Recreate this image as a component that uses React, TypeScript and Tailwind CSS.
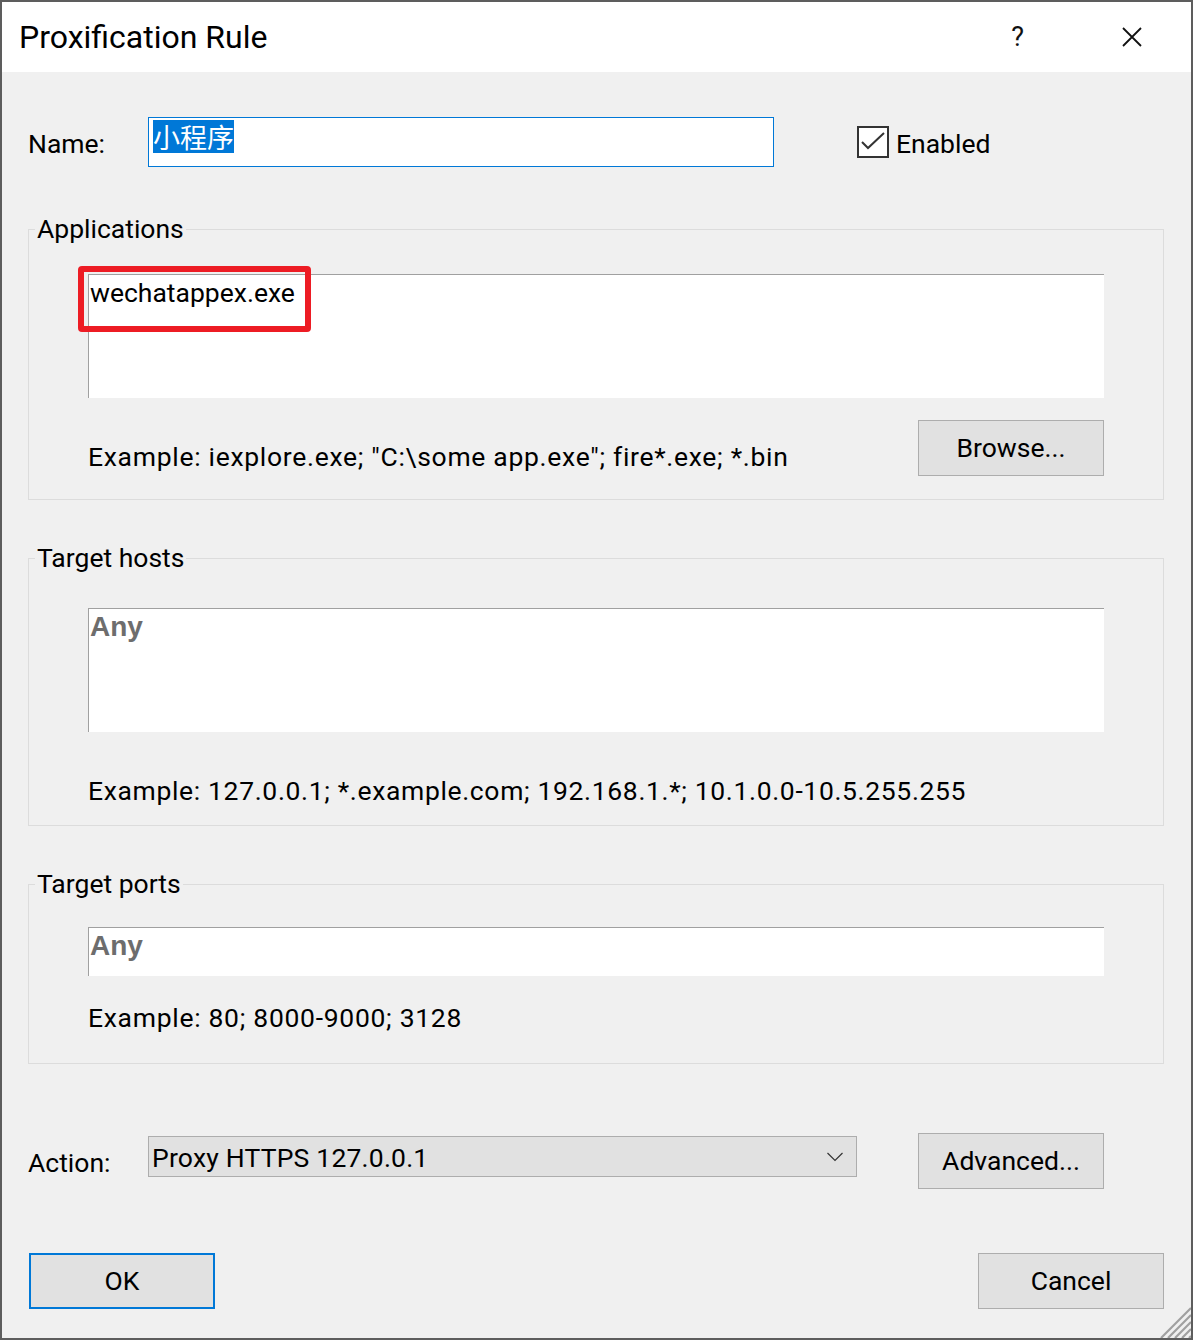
import type { ReactNode } from 'react'

const ui = "font-['Roboto','Noto_Sans_CJK_SC',sans-serif]"

function WinButton({ children, focused = false, className = '' }: { children: ReactNode; focused?: boolean; className?: string }) {
  return (
    <button
      className={`h-[56px] w-[186px] shrink-0 bg-[#e1e1e1] text-[26.5px] leading-none text-black ${
        focused ? 'border-2 border-[#0078d7]' : 'border border-[#adadad]'
      } ${className}`}
    >
      {children}
    </button>
  )
}

function Group({ title, className = '', children }: { title: string; className?: string; children: ReactNode }) {
  return (
    <fieldset className={`w-[1136px] border border-[#dcdcdc] ${className}`}>
      <legend className="ml-[6px] px-[2px] text-[26.5px] leading-[40px] text-black">{title}</legend>
      {children}
    </fieldset>
  )
}

function AnyText() {
  return (
    <span className="font-['Liberation_Sans',Arial,sans-serif] text-[28px] font-bold leading-[36px] text-[#6d6d6d]">Any</span>
  )
}

export default function App() {
  return (
    <div className={`${ui} relative flex h-[1340px] w-[1193px] flex-col overflow-hidden border-2 border-[#5d5d5d] text-black`}>
      {/* Title bar */}
      <div className="flex h-[70px] shrink-0 items-center bg-white pl-[17px]">
        <span className="text-[32px] leading-none">Proxification Rule</span>
        <span className="ml-auto text-[27px] leading-none text-[#111]">?</span>
        <svg className="ml-[98px] mr-[49px]" width="20" height="20" viewBox="0 0 20 20" fill="none" stroke="#111" strokeWidth="1.8">
          <path d="M1 1 L19 19 M19 1 L1 19" />
        </svg>
      </div>

      {/* Body */}
      <div className="relative flex-1 bg-[#f0f0f0] pl-[26px] pt-[45px]">
        {/* Name row */}
        <div className="flex h-[50px] items-center">
          <span className="mt-[4px] w-[120px] text-[26.5px] leading-[40px]">Name:</span>
          <div className="flex h-[50px] w-[626px] items-start border border-[#0078d7] bg-white pl-[4px] pt-[2px]">
            <span className="inline-block h-[33px] bg-[#0078d7] font-['Noto_Sans_CJK_SC',sans-serif] text-[27px] leading-[33px] text-white">
              小程序
            </span>
          </div>
          <div className="ml-[83px] flex h-[32px] w-[32px] items-center justify-center border-2 border-[#333] bg-white">
            <svg width="26" height="20" viewBox="0 0 26 20" fill="none" stroke="#333" strokeWidth="2">
              <path d="M2 10 L8 16 L24 1" />
            </svg>
          </div>
          <span className="ml-[7px] mt-[4px] text-[26.5px] leading-[40px]">Enabled</span>
        </div>

        {/* Applications */}
        <Group title="Applications" className="mt-[42px]">
          <div className="px-[59px] pb-[23px]">
            <div className="relative mt-[25px] h-[124px] border-l border-t border-[#a0a0a0] bg-white pl-[1px]">
              <span className="text-[26.5px] leading-[36px]">wechatappex.exe</span>
              <div className="absolute left-[-11px] top-[-9px] h-[66px] w-[233px] rounded-[4px] border-[6px] border-[#ed1c24]" />
            </div>
            <div className="mt-[22px] flex items-end justify-between">
              <span className="text-[26.5px] leading-[38px] tracking-[0.7px]">
                Example: iexplore.exe; "C:\some app.exe"; fire*.exe; *.bin
              </span>
              <WinButton>Browse...</WinButton>
            </div>
          </div>
        </Group>

        {/* Target hosts */}
        <Group title="Target hosts" className="mt-[38px]">
          <div className="px-[59px] pb-[14px]">
            <div className="mt-[30px] h-[124px] border-l border-t border-[#a0a0a0] bg-white pl-[1px]">
              <AnyText />
            </div>
            <p className="mt-[39px] text-[26.5px] leading-[40px] tracking-[0.65px]">
              Example: 127.0.0.1; *.example.com; 192.168.1.*; 10.1.0.0-10.5.255.255
            </p>
          </div>
        </Group>

        {/* Target ports */}
        <Group title="Target ports" className="mt-[38px]">
          <div className="px-[59px] pb-[25px]">
            <div className="mt-[23px] h-[49px] border-l border-t border-[#a0a0a0] bg-white pl-[1px]">
              <AnyText />
            </div>
            <p className="mt-[22px] text-[26.5px] leading-[40px] tracking-[0.7px]">Example: 80; 8000-9000; 3128</p>
          </div>
        </Group>

        {/* Action row */}
        <div className="mt-[69px] flex items-start">
          <span className="mt-[10px] w-[120px] text-[26.5px] leading-[40px]">Action:</span>
          <div className="mt-[3px] flex h-[41px] w-[709px] items-center justify-between border border-[#adadad] bg-[#e1e1e1] pl-[3px] pr-[13px]">
            <span className="pt-[3px] text-[26.5px] leading-[38px] tracking-[0.2px]">Proxy HTTPS 127.0.0.1</span>
            <svg width="16" height="10" viewBox="0 0 16 10" fill="none" stroke="#333" strokeWidth="1.2">
              <path d="M0.5 1 L8 8.5 L15.5 1" />
            </svg>
          </div>
          <WinButton className="ml-[61px]">Advanced...</WinButton>
        </div>

        {/* Dialog buttons */}
        <div className="mt-[64px] flex w-[1136px] justify-between">
          <WinButton focused className="ml-[1px]">OK</WinButton>
          <WinButton>Cancel</WinButton>
        </div>

        {/* Size grip */}
        <svg className="absolute bottom-0 right-0" width="32" height="32" viewBox="0 0 32 32" stroke="#a0a0a0" strokeWidth="2.2">
          <path d="M32 2 L2 32 M32 9 L9 32 M32 16 L16 32 M32 23 L23 32 M32 30 L30 32" />
        </svg>
      </div>
    </div>
  )
}
